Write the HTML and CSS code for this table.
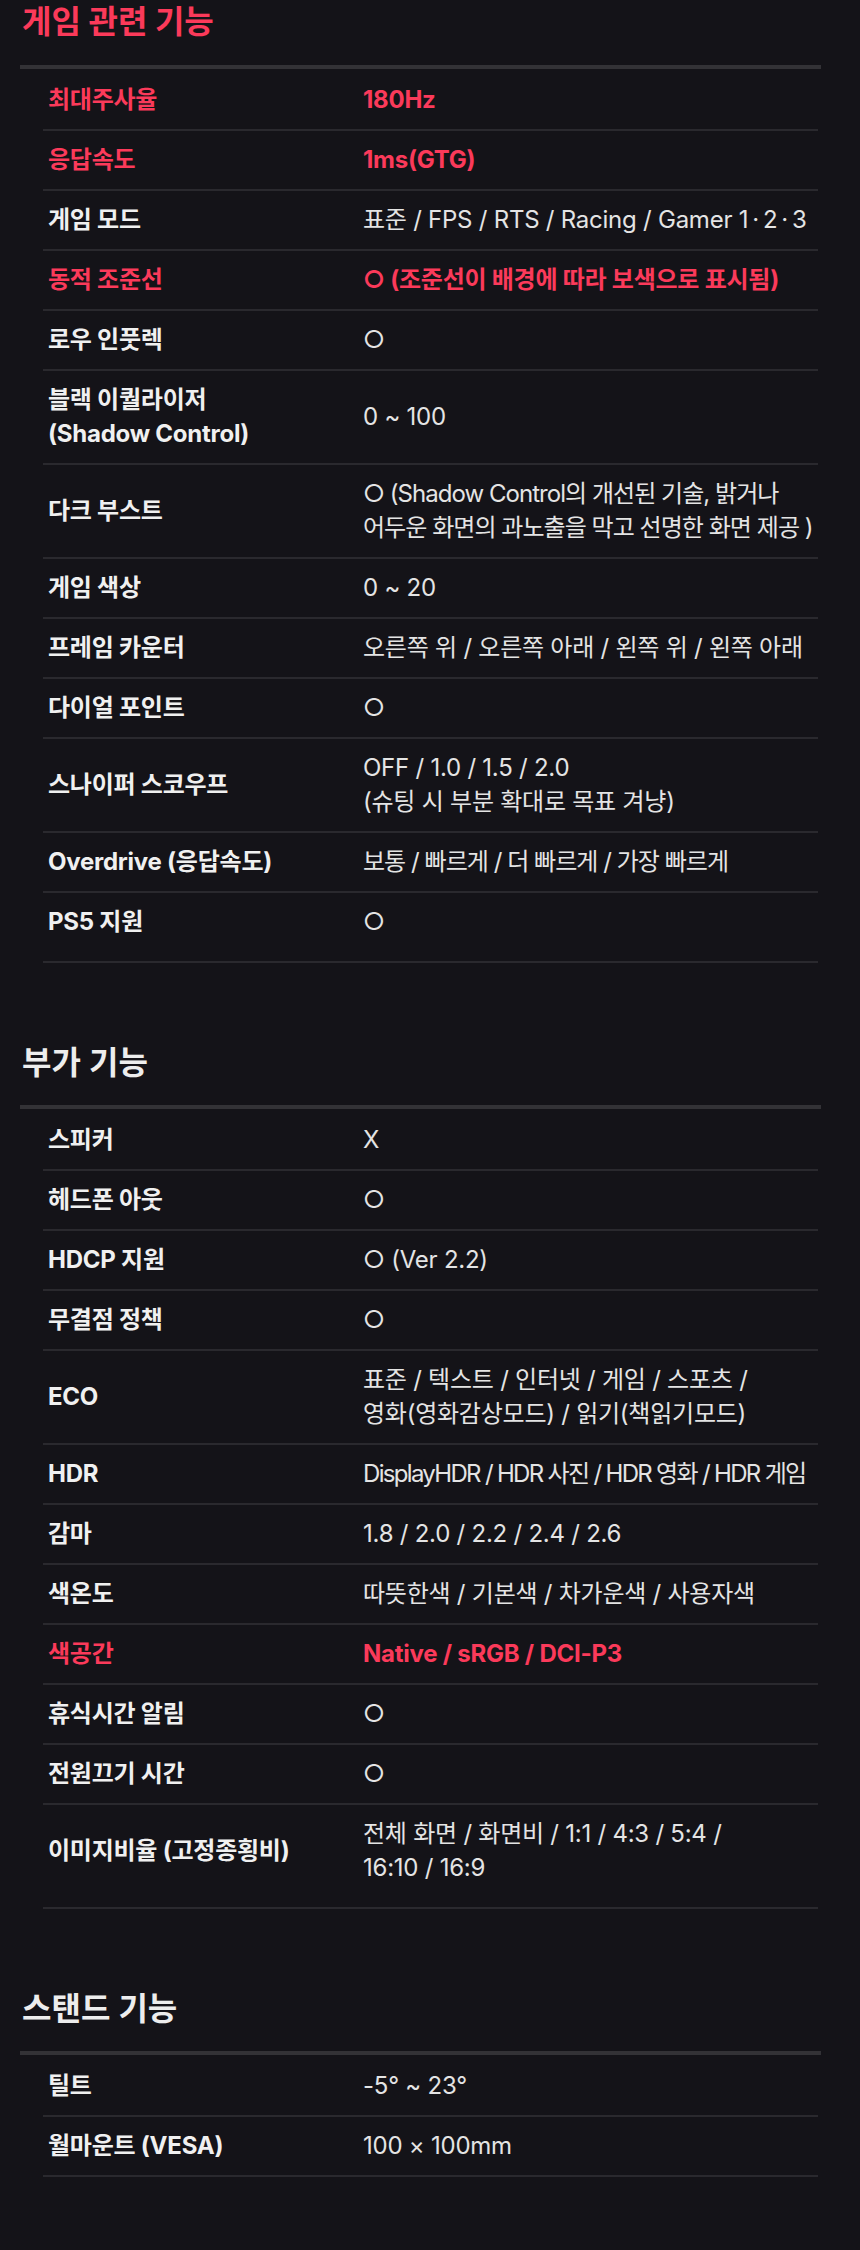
FILE: index.html
```html
<!DOCTYPE html>
<html lang="ko">
<head>
<meta charset="utf-8">
<title>제품 사양</title>
<link rel="stylesheet" href="styles.css">
</head>
<body>
<main class="page">

  <section class="spec spec--first">
    <h2 class="spec-title spec-title--accent">게임 관련 기능</h2>
    <div class="spec-table">
      <div class="row row--hl"><div class="label">최대주사율</div><div class="value">180Hz</div></div>
      <div class="row row--hl"><div class="label">응답속도</div><div class="value">1ms(GTG)</div></div>
      <div class="row"><div class="label">게임 모드</div><div class="value">표준 / FPS / RTS / Racing / Gamer 1<span class="dot">·</span>2<span class="dot">·</span>3</div></div>
      <div class="row row--hl"><div class="label">동적 조준선</div><div class="value">○ (조준선이 배경에 따라 보색으로 표시됨)</div></div>
      <div class="row"><div class="label">로우 인풋렉</div><div class="value">○</div></div>
      <div class="row"><div class="label">블랙 이퀄라이저<br>(Shadow Control)</div><div class="value">0 ~ 100</div></div>
      <div class="row"><div class="label">다크 부스트</div><div class="value value--snug">○ (Shadow Control의 개선된 기술, 밝거나<br>어두운 화면의 과노출을 막고 선명한 화면 제공 )</div></div>
      <div class="row"><div class="label">게임 색상</div><div class="value">0 ~ 20</div></div>
      <div class="row"><div class="label">프레임 카운터</div><div class="value">오른쪽 위 / 오른쪽 아래 / 왼쪽 위 / 왼쪽 아래</div></div>
      <div class="row"><div class="label">다이얼 포인트</div><div class="value">○</div></div>
      <div class="row"><div class="label">스나이퍼 스코우프</div><div class="value">OFF / 1.0 / 1.5 / 2.0<br>(슈팅 시 부분 확대로 목표 겨냥)</div></div>
      <div class="row"><div class="label">Overdrive (응답속도)</div><div class="value value--snug">보통 / 빠르게 / 더 빠르게 / 가장 빠르게</div></div>
      <div class="row row--last"><div class="label">PS5 지원</div><div class="value">○</div></div>
    </div>
  </section>

  <section class="spec">
    <h2 class="spec-title">부가 기능</h2>
    <div class="spec-table">
      <div class="row"><div class="label">스피커</div><div class="value">X</div></div>
      <div class="row"><div class="label">헤드폰 아웃</div><div class="value">○</div></div>
      <div class="row"><div class="label">HDCP 지원</div><div class="value">○ (Ver 2.2)</div></div>
      <div class="row"><div class="label">무결점 정책</div><div class="value">○</div></div>
      <div class="row"><div class="label">ECO</div><div class="value">표준 / 텍스트 / 인터넷 / 게임 / 스포츠 /<br>영화(영화감상모드) / 읽기(책읽기모드)</div></div>
      <div class="row"><div class="label">HDR</div><div class="value value--tight">DisplayHDR / HDR 사진 / HDR 영화 / HDR 게임</div></div>
      <div class="row"><div class="label">감마</div><div class="value">1.8 / 2.0 / 2.2 / 2.4 / 2.6</div></div>
      <div class="row"><div class="label">색온도</div><div class="value">따뜻한색 / 기본색 / 차가운색 / 사용자색</div></div>
      <div class="row row--hl"><div class="label">색공간</div><div class="value">Native / sRGB / DCI-P3</div></div>
      <div class="row"><div class="label">휴식시간 알림</div><div class="value">○</div></div>
      <div class="row"><div class="label">전원끄기 시간</div><div class="value">○</div></div>
      <div class="row row--last"><div class="label">이미지비율 (고정종횡비)</div><div class="value">전체 화면 / 화면비 / 1:1 / 4:3 / 5:4 /<br>16:10 / 16:9</div></div>
    </div>
  </section>

  <section class="spec">
    <h2 class="spec-title">스탠드 기능</h2>
    <div class="spec-table">
      <div class="row"><div class="label">틸트</div><div class="value">-5° ~ 23°</div></div>
      <div class="row"><div class="label">월마운트 (VESA)</div><div class="value">100 × 100mm</div></div>
    </div>
  </section>

</main>
</body>
</html>
```

FILE: styles.css
```css
html, body {
  margin: 0;
  padding: 0;
  background: #141318;
}

body {
  font-family: Inter, "Noto Sans CJK KR", sans-serif;
  color: #ededed;
}

.page {
  padding: 0 39px 80px 20px;
}

.spec {
  margin-top: 77px;
}

.spec--first {
  margin-top: 0;
}

.spec-title {
  margin: 0;
  padding: 0 0 19px 2px;
  font-size: 32px;
  font-weight: 600;
  line-height: 46px;
  color: #ededed;
  border-bottom: 4px solid #333236;
}

.spec--first .spec-title {
  font-weight: 700;
  line-height: 44px;
  padding-bottom: 21px;
}

.spec-title--accent {
  color: #fb3a5a;
}

.spec-table {
  margin: 0 3px 0 23px;
  padding-top: 2px;
}

.row {
  display: grid;
  grid-template-columns: 315px 1fr;
  padding: 12px 8px 12px 5px;
  border-bottom: 2px solid #2a292e;
  font-size: 24px;
  line-height: 34px;
  align-items: center;
}

.row--last {
  padding-bottom: 22px;
}

.spec:last-child .row:last-child {
  padding-bottom: 12px;
}

.label {
  font-weight: 700;
  color: #f0f0f0;
  letter-spacing: -0.01em;
}

.value {
  font-weight: 400;
  color: #e4e4e4;
  white-space: nowrap;
  letter-spacing: -0.01em;
}

.value--snug {
  letter-spacing: -0.04em;
}

.value--tight {
  letter-spacing: -0.07em;
}

.dot {
  padding: 0 4px;
}

.row--hl .label,
.row--hl .value {
  color: #fb3a5a;
  font-weight: 700;
}
```
